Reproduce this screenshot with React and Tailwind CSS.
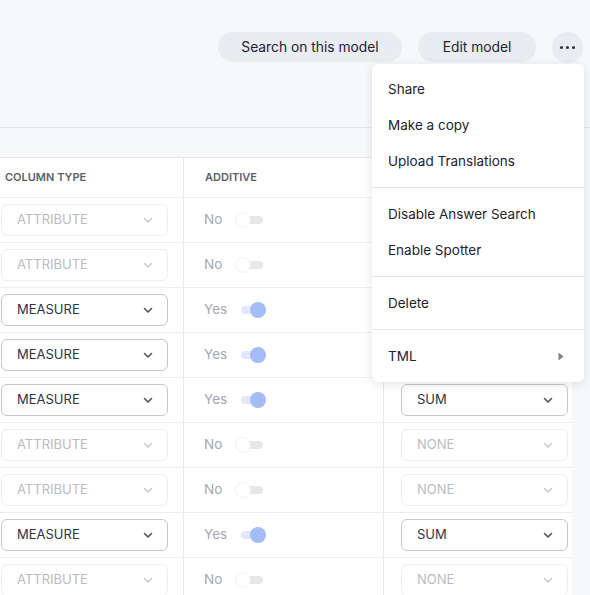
import React from 'react'

const rows = [
  { type: 'ATTRIBUTE', additive: false, agg: 'NONE' },
  { type: 'ATTRIBUTE', additive: false, agg: 'NONE' },
  { type: 'MEASURE', additive: true, agg: 'SUM' },
  { type: 'MEASURE', additive: true, agg: 'SUM' },
  { type: 'MEASURE', additive: true, agg: 'SUM' },
  { type: 'ATTRIBUTE', additive: false, agg: 'NONE' },
  { type: 'ATTRIBUTE', additive: false, agg: 'NONE' },
  { type: 'MEASURE', additive: true, agg: 'SUM' },
  { type: 'ATTRIBUTE', additive: false, agg: 'NONE' },
]

// rows whose aggregation cell sits under the open menu
const HIDDEN_UNDER_MENU = 4

const Chevron = ({ active }) => (
  <svg width="12" height="12" viewBox="0 0 12 12" fill="none">
    <path
      d="M2.5 4.5 6 8l3.5-3.5"
      stroke={active ? '#4b5261' : '#c8ccd2'}
      strokeWidth="1.6"
      strokeLinecap="round"
      strokeLinejoin="round"
    />
  </svg>
)

const Select = ({ value, active }) => (
  <div
    className={
      'flex items-center justify-between w-[167px] h-[32px] rounded-[6px] border pl-[15px] pr-[13px] text-[13px] ' +
      (active ? 'border-[#c3c7ce] text-[#2f3542]' : 'border-[#eceef1] text-[#b8bcc3]')
    }
  >
    <span>{value}</span>
    <Chevron active={active} />
  </div>
)

const Toggle = ({ on }) =>
  on ? (
    <div className="relative w-[28px] h-[16px]">
      <div className="absolute left-[3px] top-[4px] w-[20px] h-[8px] rounded-full bg-[#e1e8fb]" />
      <div className="absolute left-[12px] top-0 w-[16px] h-[16px] rounded-full bg-[#a4bdf7]" />
    </div>
  ) : (
    <div className="relative w-[28px] h-[16px]">
      <div className="absolute left-[9px] top-[4px] w-[19px] h-[8px] rounded-full bg-[#e5e7eb]" />
      <div className="absolute left-0 top-0 w-[16px] h-[16px] rounded-full bg-white border border-[#eff1f3]" />
    </div>
  )

const menuGroups = [
  ['Share', 'Make a copy', 'Upload Translations'],
  ['Disable Answer Search', 'Enable Spotter'],
  ['Delete'],
  ['TML'],
]

export default function App() {
  return (
    <div
      className="relative w-[590px] h-[595px] overflow-hidden bg-[#f7f8fa]"
      style={{ fontFamily: 'Inter, "Noto Sans", sans-serif' }}
    >
      {/* header */}
      <div className="h-[128px] border-b border-[#e4e6ea] flex justify-end items-start gap-4 pt-[32px] pr-[7px]">
        <button className="h-[30px] w-[184px] rounded-full bg-[#e9ecf0] text-[13.8px] text-[#1f2430]">
          Search on this model
        </button>
        <button className="h-[30px] w-[118px] rounded-full bg-[#e9ecf0] text-[13.8px] text-[#1f2430]">
          Edit model
        </button>
        <button className="h-[31px] w-[31px] rounded-full bg-[#e9ecf0] flex items-center justify-center gap-[3px]">
          <span className="w-[3px] h-[3px] rounded-full bg-[#2a2f3a]" />
          <span className="w-[3px] h-[3px] rounded-full bg-[#2a2f3a]" />
          <span className="w-[3px] h-[3px] rounded-full bg-[#2a2f3a]" />
        </button>
      </div>

      <div className="h-[29px]" />

      {/* table */}
      <div className="w-[572px] bg-white border-t border-[#e4e6ea]">
        <div className="flex h-[40px] border-b border-[#eceef1] text-[11px] font-semibold text-[#5b616b]">
          <div className="w-[184px] border-r border-[#e7e9ec] flex items-center pl-[5px]">COLUMN TYPE</div>
          <div className="w-[200px] border-r border-[#e7e9ec] flex items-center pl-[21px]">ADDITIVE</div>
          <div className="flex-1" />
        </div>
        {rows.map((r, i) => {
          const active = r.type === 'MEASURE'
          return (
            <div key={i} className="flex h-[45px] border-b border-[#eceef1]">
              <div className="w-[184px] border-r border-[#e7e9ec] flex items-center pl-[1px] pb-[1px]">
                <Select value={r.type} active={active} />
              </div>
              <div className="w-[200px] border-r border-[#e7e9ec] flex items-center pl-[20px] pb-[1px] gap-[9px] text-[13.5px] text-[#a3a8b0]">
                <span className={r.additive ? 'w-[25px]' : 'w-[22px]'}>{r.additive ? 'Yes' : 'No'}</span>
                <Toggle on={r.additive} />
              </div>
              <div className="flex-1 flex items-center pl-[17px] pb-[1px]">
                {i >= HIDDEN_UNDER_MENU && <Select value={r.agg} active={active} />}
              </div>
            </div>
          )
        })}
      </div>

      {/* dropdown menu */}
      <div className="absolute left-[372px] top-[64px] w-[212px] bg-white rounded-[6px] shadow-[0_2px_10px_rgba(20,30,50,0.12)] text-[13.5px] text-[#1d2330]">
        {menuGroups.map((g, gi) => (
          <div
            key={gi}
            className={(gi === 0 ? 'pt-[7px] ' : 'pt-[8px] ') + 'pb-[8px] ' + (gi < menuGroups.length - 1 ? 'border-b border-[#e4e6ea]' : '')}
          >
            {g.map((item) => (
              <div key={item} className="h-[36px] flex items-center justify-between pl-[16px] pr-[20px]">
                <span>{item}</span>
                {item === 'TML' && (
                  <svg width="6" height="9" viewBox="0 0 6 9">
                    <path d="M0.5 0.5 5.5 4.5 0.5 8.5Z" fill="#7a808a" />
                  </svg>
                )}
              </div>
            ))}
          </div>
        ))}
      </div>
    </div>
  )
}
